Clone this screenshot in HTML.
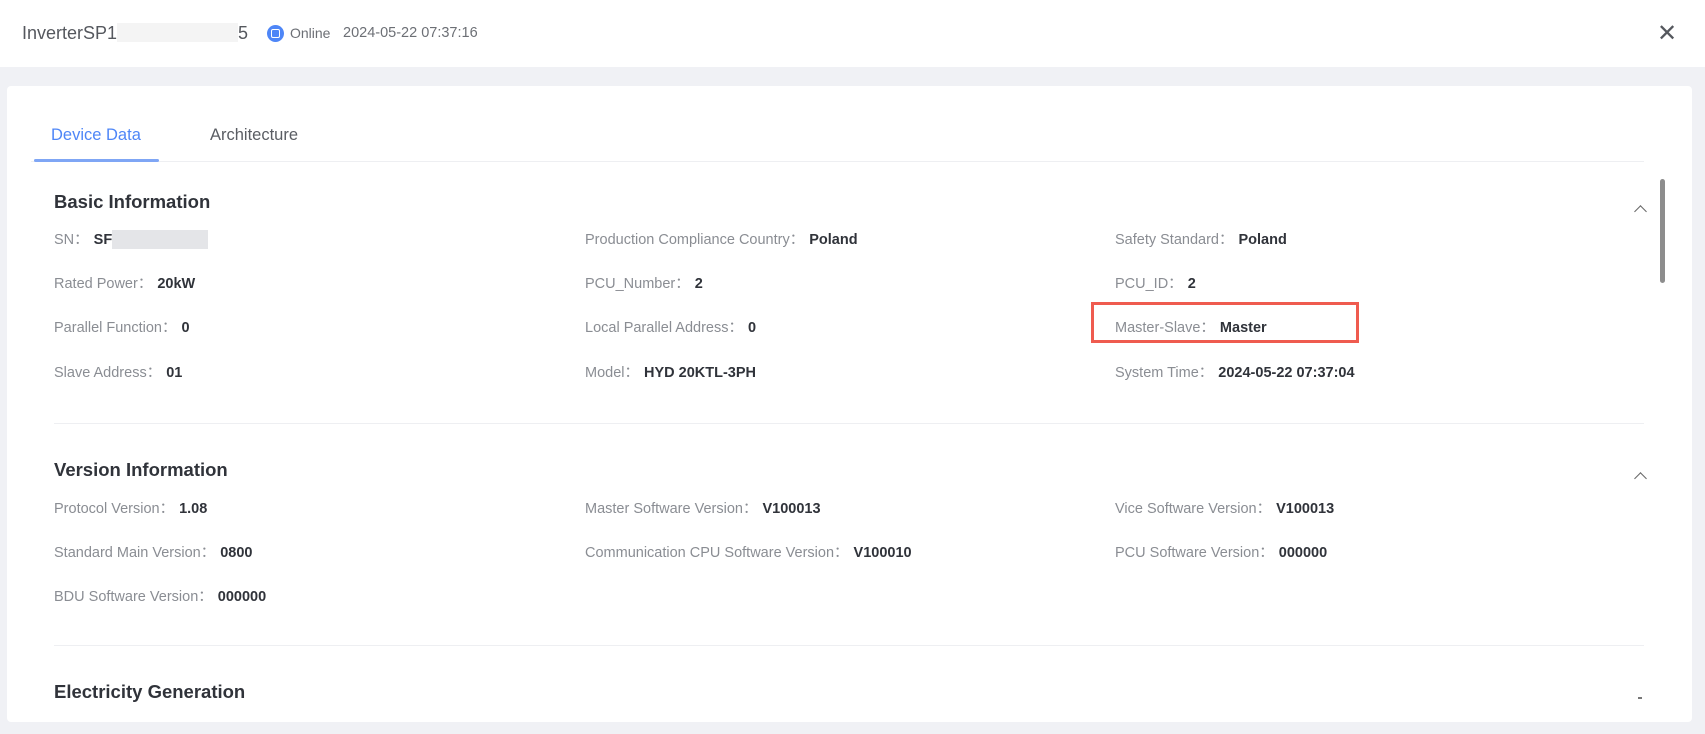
<!DOCTYPE html>
<html><head><meta charset="utf-8"><style>
*{margin:0;padding:0;box-sizing:border-box}
body{width:1705px;height:734px;background:#f0f1f5;font-family:"Liberation Sans",sans-serif;position:relative;overflow:hidden}
.hdr{position:absolute;left:0;top:0;width:1705px;height:67px;background:#fff}
.a{position:absolute;white-space:nowrap}
.card{position:absolute;left:7px;top:86px;width:1685px;height:636px;background:#fff;border-radius:4px}
.l{color:#8a8d93;font-size:14.5px}
.l b{color:#30333a;font-weight:bold;margin-left:5px}
.h{font-size:18.5px;font-weight:bold;color:#30333a}
.div{position:absolute;left:54px;width:1590px;height:1px;background:#eeeff2}
.chev{position:absolute;width:9px;height:9px;border-left:1.6px solid #666;border-top:1.6px solid #666;transform:rotate(45deg)}
</style></head><body>
<div class="hdr"></div>
<div class="a" style="left:22px;top:23px;font-size:18px;color:#55585e">InverterSP1<span style="display:inline-block;width:121px;height:19px;background:#f4f4f4;vertical-align:-3px"></span>5</div>
<div class="a" style="left:267px;top:25px;width:17px;height:17px;border-radius:50%;background:#4e86f7"><div style="position:absolute;left:4px;top:4px;width:9px;height:9px;border:1.5px solid #fff;border-radius:2px"></div></div>
<div class="a" style="left:290px;top:25px;font-size:14px;color:#6c6f75">Online</div>
<div class="a" style="left:343px;top:25px;font-size:14.5px;color:#6c6f75">2024-05-22 07:37:16</div>
<div class="a" style="left:1657px;top:19px;font-size:24px;color:#55585e">✕</div>

<div class="card"></div>
<div class="a" style="left:51px;top:126px;font-size:16.5px;color:#4e86f7">Device Data</div>
<div class="a" style="left:210px;top:126px;font-size:16.5px;color:#5a5d63">Architecture</div>
<div class="a" style="left:31px;top:161px;width:1613px;height:1px;background:#eeeff2"></div>
<div class="a" style="left:34px;top:159px;width:125px;height:3px;background:#7fa6f5;border-radius:2px"></div>

<div class="a" style="left:1660px;top:179px;width:5px;height:104px;background:#8d8d8d;border-radius:3px"></div>

<div class="a h" style="left:54px;top:191px">Basic Information</div>
<div class="chev" style="left:1636px;top:207px"></div>
<div class="a l" style="left:54px;top:228px">SN：<b>SF</b><span style="display:inline-block;width:96px;height:19px;background:#e4e5e8;vertical-align:-5px"></span></div>
<div class="a l" style="left:585px;top:228px">Production Compliance Country：<b>Poland</b></div>
<div class="a l" style="left:1115px;top:228px">Safety Standard：<b>Poland</b></div>
<div class="a l" style="left:54px;top:272px">Rated Power：<b>20kW</b></div>
<div class="a l" style="left:585px;top:272px">PCU_Number：<b>2</b></div>
<div class="a l" style="left:1115px;top:272px">PCU_ID：<b>2</b></div>
<div class="a l" style="left:54px;top:316px">Parallel Function：<b>0</b></div>
<div class="a l" style="left:585px;top:316px">Local Parallel Address：<b>0</b></div>
<div class="a l" style="left:1115px;top:316px">Master-Slave：<b>Master</b></div>
<div class="a" style="left:1091px;top:302px;width:268px;height:41px;border:3px solid #ef5b4f"></div>
<div class="a l" style="left:54px;top:361px">Slave Address：<b>01</b></div>
<div class="a l" style="left:585px;top:361px">Model：<b>HYD 20KTL-3PH</b></div>
<div class="a l" style="left:1115px;top:361px">System Time：<b>2024-05-22 07:37:04</b></div>
<div class="div" style="top:423px"></div>

<div class="a h" style="left:54px;top:459px">Version Information</div>
<div class="chev" style="left:1636px;top:474px"></div>
<div class="a l" style="left:54px;top:497px">Protocol Version：<b>1.08</b></div>
<div class="a l" style="left:585px;top:497px">Master Software Version：<b>V100013</b></div>
<div class="a l" style="left:1115px;top:497px">Vice Software Version：<b>V100013</b></div>
<div class="a l" style="left:54px;top:541px">Standard Main Version：<b>0800</b></div>
<div class="a l" style="left:585px;top:541px">Communication CPU Software Version：<b>V100010</b></div>
<div class="a l" style="left:1115px;top:541px">PCU Software Version：<b>000000</b></div>
<div class="a l" style="left:54px;top:585px">BDU Software Version：<b>000000</b></div>
<div class="div" style="top:645px"></div>

<div class="a h" style="left:54px;top:681px">Electricity Generation</div>
<div class="a" style="left:1638px;top:697px;width:4px;height:1.5px;background:#777"></div>
</body></html>
